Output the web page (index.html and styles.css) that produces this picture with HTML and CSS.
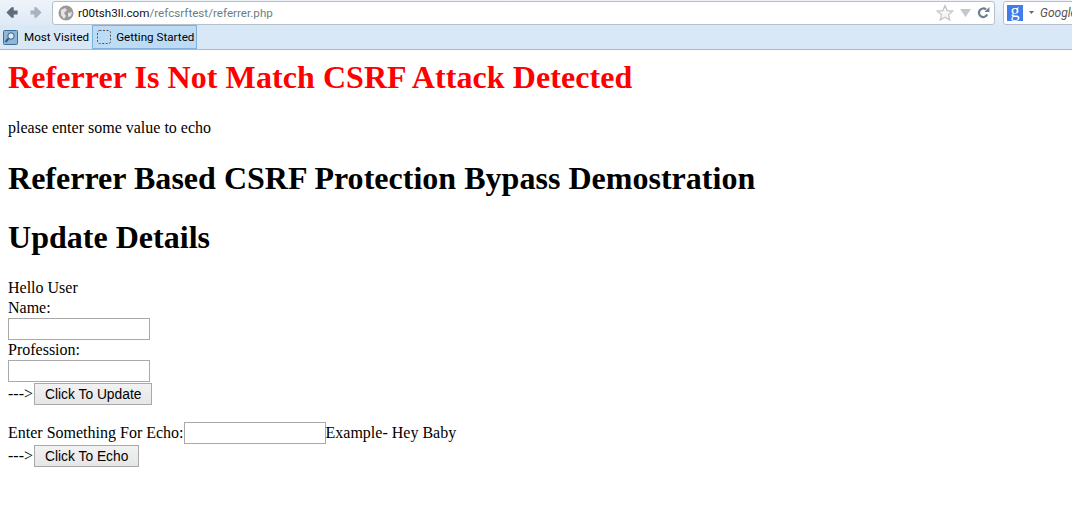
FILE: index.html
```html
<!DOCTYPE html>
<html>
<head>
<meta charset="utf-8">
<title>referrer</title>
<link rel="stylesheet" href="styles.css">
</head>
<body>
<header class="chrome">
  <div class="navbar">
    <svg class="nav-icon" width="12" height="13" viewBox="0 0 14 14"><path d="M0.5 7 L6.5 1 H9 V4.8 H13.5 V9.2 H9 V13 H6.5 Z" fill="#5e6b78"/></svg>
    <svg class="nav-icon next" width="12" height="13" viewBox="0 0 14 14"><path d="M13.5 7 L7.5 1 H5 V4.8 H0.5 V9.2 H5 V13 H7.5 Z" fill="#a9b4c0"/></svg>
    <div class="urlbar">
      <svg width="16" height="16" viewBox="0 0 16 16" class="globe"><circle cx="8" cy="8" r="7.5" fill="#9a9a9a"/><path d="M3 5 L7 3 L9 5 L6 8 L8 11 L6 14 L3 10 Z M10 8 L14 7 L13 11 L10 12 Z" fill="#e4e4e4"/></svg>
      <span class="host">r00tsh3ll.com</span><span class="path">/refcsrftest/referrer.php</span>
      <span class="spacer"></span>
      <svg width="18" height="18" viewBox="0 0 18 18"><path d="M9 1.5 L11.2 6.6 L16.7 7.1 L12.5 10.7 L13.8 16.1 L9 13.2 L4.2 16.1 L5.5 10.7 L1.3 7.1 L6.8 6.6 Z" fill="#f6f6f6" stroke="#c4c4c4" stroke-width="1.2"/></svg>
      <svg class="drop" width="11" height="8" viewBox="0 0 11 8"><path d="M0 0 H11 L5.5 8 Z" fill="#c0c8d2"/></svg>
      <svg class="reload" width="13" height="13" viewBox="0 0 14 14"><path d="M11 9 A4.6 4.6 0 1 1 9.8 3.8" fill="none" stroke="#6f7f8f" stroke-width="2.4"/><path d="M8 6.4 H13.4 V1 Z" fill="#6f7f8f"/></svg>
    </div>
    <div class="searchbar">
      <span class="gbadge">g</span>
      <svg class="sdrop" width="5" height="3" viewBox="0 0 5 3"><path d="M0 0 H5 L2.5 3 Z" fill="#666"/></svg>
      <span class="sname">Google</span>
    </div>
  </div>
  <div class="bookmarks">
    <span class="bm">
      <svg width="16" height="16" viewBox="0 0 16 16"><rect x="0.5" y="1.5" width="14" height="14" rx="1" fill="#8fb6d6" stroke="#3e6f96"/><circle cx="8" cy="7" r="3.2" fill="#dcebf6" stroke="#2f5f86"/><path d="M5.5 9.5 L2.5 13" stroke="#2f5f86" stroke-width="2"/></svg>
      Most Visited
    </span>
    <span class="bm bm-active">
      <svg width="16" height="16" viewBox="0 0 16 16"><rect x="1.5" y="1.5" width="13" height="13" rx="2" fill="none" stroke="#555" stroke-dasharray="2 1.5"/></svg>
      Getting Started
    </span>
  </div>
</header>
<main class="page">
  <h1 class="alert">Referrer Is Not Match CSRF Attack Detected</h1>
  <p class="notice">please enter some value to echo</p>
  <h1 class="title">Referrer Based CSRF Protection Bypass Demostration</h1>
  <h1 class="title">Update Details</h1>
  <form class="form">
    <div class="line">Hello User</div>
    <div class="line">Name:</div>
    <div class="ctl"><input type="text" class="field"></div>
    <div class="line">Profession:</div>
    <div class="ctl"><input type="text" class="field"></div>
    <div class="ctl action">---&gt;<button type="button" class="btn">Click To Update</button></div>
  </form>
  <form class="form echo">
    <div class="ctl">Enter Something For Echo:<input type="text" class="field">Example- Hey Baby</div>
    <div class="ctl action">---&gt;<button type="button" class="btn">Click To Echo</button></div>
  </form>
</main>
</body>
</html>
```
FILE: styles.css
```css
html, body { margin: 0; padding: 0; background: #fff; overflow: hidden; }
body { width: 1072px; height: 509px; font-family: "Liberation Serif", serif; font-size: 16px; color: #000; }
.chrome { height: 50px; box-sizing: border-box; background: #d9e8f7; border-bottom: 1px solid #a9b7c6; }
.navbar { height: 25px; display: flex; align-items: center; padding-left: 6px; background: linear-gradient(#eef3f9, #dfeaf6); }
.nav-icon { flex: none; }
.next { margin-left: 12px; }
.urlbar { flex: none; width: 943px; height: 24px; margin-left: 10px; box-sizing: border-box; display: flex; align-items: center; background: #fff; border: 1px solid #b5c0cc; border-radius: 3px; padding: 0 4px 0 5px; font: 11.65px Roboto, "Liberation Sans", sans-serif; }
.globe { margin-right: 4px; }
.host { color: #111; }
.path { color: #6b7f7f; }
.spacer { flex: 1; }
.drop { margin: 0 6px 0 6px; }
.reload { margin-right: 0; }
.searchbar { flex: 1; height: 24px; margin-left: 8px; margin-right: -4px; box-sizing: border-box; display: flex; align-items: center; background: #fff; border: 1px solid #b5c0cc; border-radius: 3px 0 0 3px; padding-left: 3px; white-space: nowrap; overflow: hidden; }
.gbadge { width: 16px; height: 16px; background: #3f7ee8; color: #fff; font: 18px/12px "Liberation Serif", serif; text-align: center; flex: none; }
.sdrop { margin: 0 6px 0 6px; flex: none; }
.sname { font: italic 12px Roboto, "Liberation Sans", sans-serif; color: #555; }
.bookmarks { height: 24px; display: flex; align-items: center; padding-left: 3px; font: 11.65px Roboto, "Liberation Sans", sans-serif; color: #000; }
.bm { display: flex; align-items: center; gap: 5px; height: 24px; box-sizing: border-box; padding-right: 3px; }
.bm-active { background: #bcdcf6; border: 1px solid #7fb1dc; padding: 0 2px 0 3px; gap: 4px; }
.page { padding: 0 8px; }
.alert { color: #f00; font-size: 32px; line-height: 37px; margin: 9px 0 22px; letter-spacing: 0.07px; }
.notice { margin: 0 0 17px; line-height: 20px; }
.title { font-size: 32px; line-height: 37px; margin: 22px 0; letter-spacing: 0.02px; }
.form { margin: 0 0 17px; }
.line { line-height: 20px; }
.ctl { line-height: 20px; }
.action { margin-top: 1px; }
.field { width: 142px; height: 22px; box-sizing: border-box; border: 1px solid #a9a9a9; padding: 1px 2px; margin: 0; vertical-align: baseline; background: #fff; }
.btn { height: 22px; box-sizing: border-box; padding: 0 10px; margin: 0 0 0 1px; font: 13.8px "Liberation Sans", sans-serif; color: #000; background: linear-gradient(#f2f2f2, #e6e6e6); border: 1px solid #a9a9a9; border-radius: 0; }
```
